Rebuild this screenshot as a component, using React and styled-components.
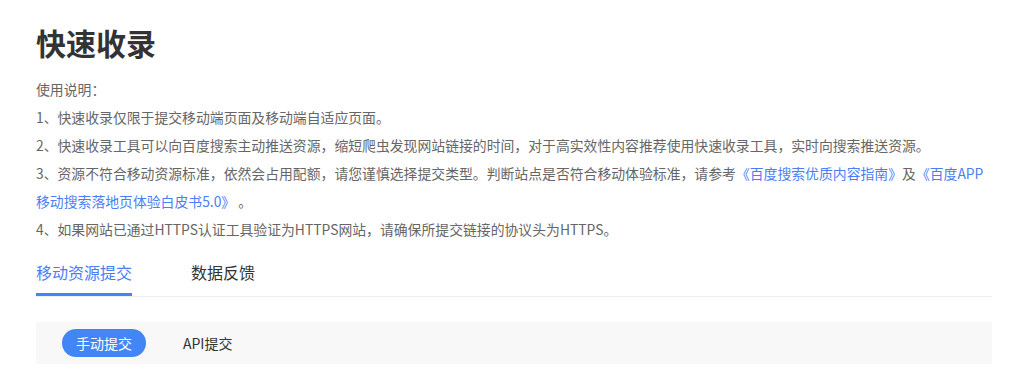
import React, { useState } from "react";
import styled, { createGlobalStyle } from "styled-components";

const GlobalStyle = createGlobalStyle`
  html, body { margin: 0; padding: 0; background: #fff; }
  body { font-family: "Microsoft YaHei", "Noto Sans CJK SC", "Noto Sans", sans-serif; }
`;

const Page = styled.div`
  width: 956px;
  padding: 22px 21px 0 36px;
`;

const Title = styled.h1`
  margin: 0 0 13px;
  font-size: 30px;
  line-height: 40px;
  font-weight: 700;
  color: #333;
`;

const Notes = styled.div`
  font-size: 13.85px;
  line-height: 28px;
  color: #666;
`;

const Para = styled.p`
  margin: 0;
`;

const Link = styled.a`
  color: #4a7ef5;
  text-decoration: none;
`;

const TabList = styled.div`
  display: flex;
  gap: 59px;
  margin-top: 17px;
  border-bottom: 1px solid #eeeeee;
`;

const Tab = styled.div`
  font-size: 16px;
  line-height: 24px;
  padding-bottom: 9px;
  color: ${(p) => (p.$active ? "#4a7ef5" : "#333")};
  border-bottom: 3px solid ${(p) => (p.$active ? "#4285f4" : "transparent")};
  cursor: pointer;
`;

const SubBar = styled.div`
  display: flex;
  align-items: center;
  gap: 23px;
  margin-top: 25px;
  height: 42px;
  padding-left: 26px;
  background: #f8f8f8;
`;

const Pill = styled.div`
  height: 28px;
  line-height: 28px;
  padding: 0 14px;
  border-radius: 14px;
  font-size: 14px;
  background: ${(p) => (p.$active ? "#4285f4" : "transparent")};
  color: ${(p) => (p.$active ? "#fff" : "#333")};
  cursor: pointer;
`;

export default function App() {
  const [tab, setTab] = useState(0);
  const [mode, setMode] = useState(0);
  return (
    <>
      <GlobalStyle />
      <Page>
        <Title>快速收录</Title>
        <Notes>
          <Para>使用说明：</Para>
          <Para>1、快速收录仅限于提交移动端页面及移动端自适应页面。</Para>
          <Para>
            2、快速收录工具可以向百度搜索主动推送资源，缩短爬虫发现网站链接的时间，对于高实效性内容推荐使用快速收录工具，实时向搜索推送资源。
          </Para>
          <Para>
            3、资源不符合移动资源标准，依然会占用配额，请您谨慎选择提交类型。判断站点是否符合移动体验标准，请参考
            <Link href="#">《百度搜索优质内容指南》</Link>及
            <Link href="#">《百度APP移动搜索落地页体验白皮书5.0》</Link> 。
          </Para>
          <Para>4、如果网站已通过HTTPS认证工具验证为HTTPS网站，请确保所提交链接的协议头为HTTPS。</Para>
        </Notes>
        <TabList>
          {["移动资源提交", "数据反馈"].map((t, i) => (
            <Tab key={t} $active={tab === i} onClick={() => setTab(i)}>
              {t}
            </Tab>
          ))}
        </TabList>
        <SubBar>
          {["手动提交", "API提交"].map((t, i) => (
            <Pill key={t} $active={mode === i} onClick={() => setMode(i)}>
              {t}
            </Pill>
          ))}
        </SubBar>
      </Page>
    </>
  );
}
